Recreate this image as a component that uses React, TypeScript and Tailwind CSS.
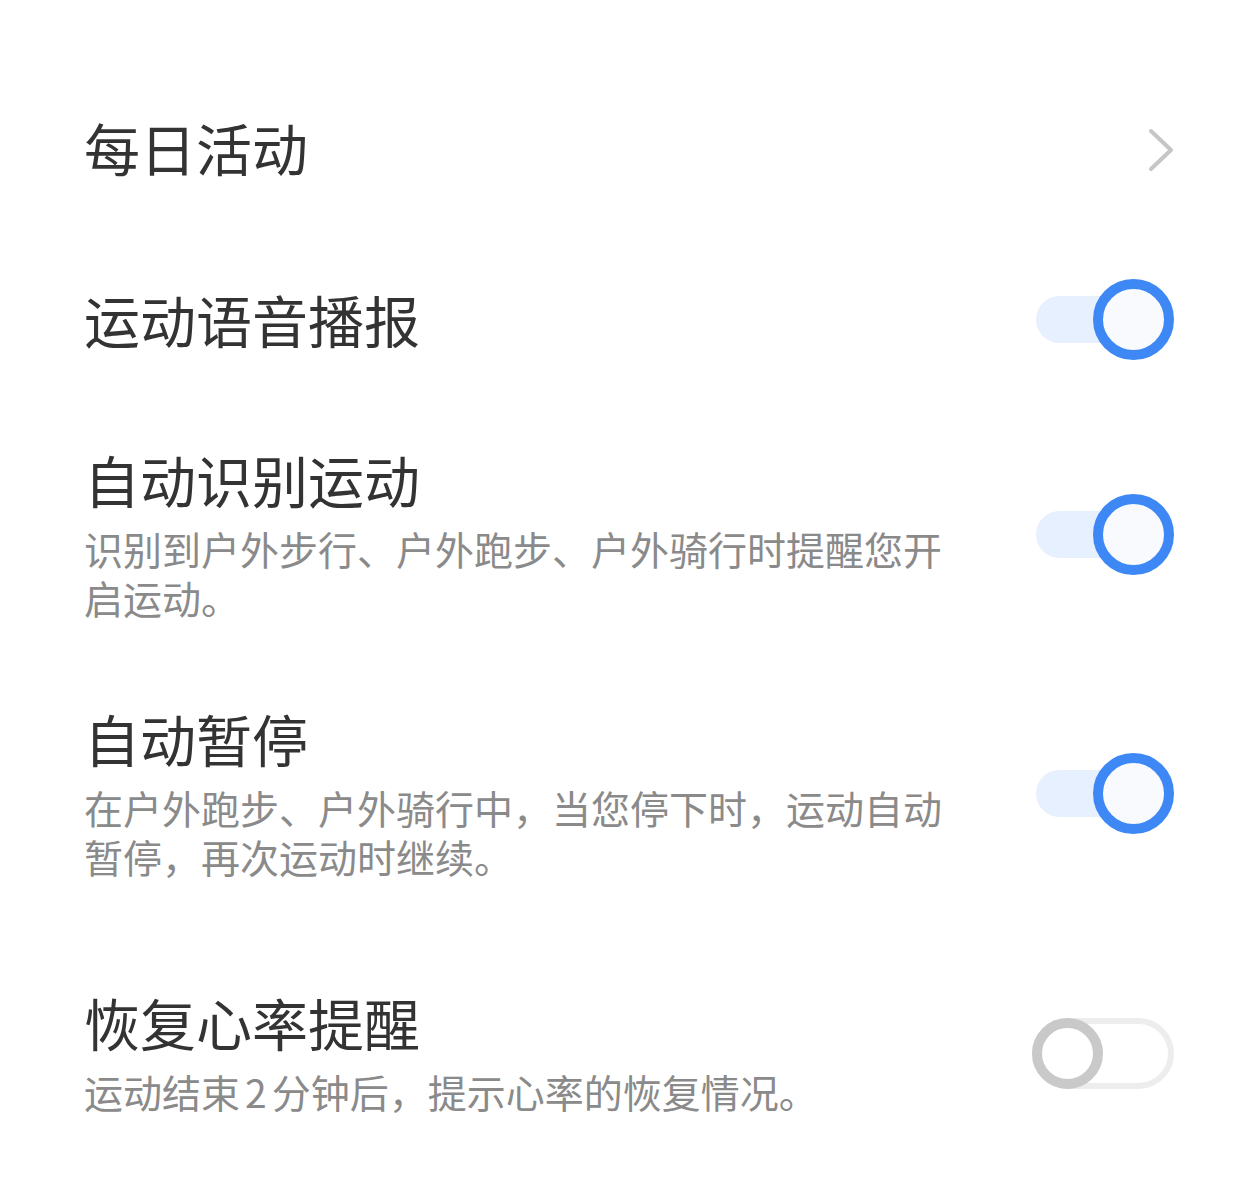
import React from 'react';

const font = { fontFamily: '"Noto Sans CJK SC", "Noto Sans", sans-serif' };

const ToggleOn = () => (
  <div className="relative w-[138px] h-[81px] shrink-0 mb-[4px]">
    <div className="absolute left-0 top-[17px] h-[47px] w-[110px] rounded-full bg-[#e6f0fe]" />
    <div className="absolute right-0 top-0 size-[81px] rounded-full border-[10px] border-[#3d88f5] bg-[#f8fafe]" />
  </div>
);

const ToggleOff = () => (
  <div className="relative w-[142px] h-[71px] shrink-0 mb-[4px] rounded-full border-[6px] border-[#ededed] bg-white">
    <div className="absolute left-[-6px] top-[-6px] size-[71px] rounded-full border-[10px] border-[#c9c9c9] bg-white" />
  </div>
);

const Chevron = () => (
  <svg width="28" height="46" viewBox="0 0 28 46" className="shrink-0 -mr-[1px]">
    <polyline
      points="4,4 24,23 4,42"
      fill="none"
      stroke="#c6c6c6"
      strokeWidth="4"
      strokeLinecap="round"
      strokeLinejoin="round"
    />
  </svg>
);

const Title: React.FC<{ children: React.ReactNode }> = ({ children }) => (
  <div className="text-[56px] leading-[66px] text-[#333333]">{children}</div>
);

const Desc: React.FC<{ children: React.ReactNode }> = ({ children }) => (
  <div className="mt-[12px] w-[870px] text-[39px] leading-[49px] text-[#8a8a8a]">{children}</div>
);

// text block sits a touch higher than the switch, like the device screen
const Text: React.FC<{ children: React.ReactNode }> = ({ children }) => (
  <div className="-ml-[2px] pb-[5px]">{children}</div>
);

export default function App() {
  return (
    <div className="w-[1260px] h-[1177px] bg-white px-[86px] pt-[114px] flex flex-col" style={font}>
      <div className="flex items-center justify-between">
        <Text>
          <Title>每日活动</Title>
        </Text>
        <Chevron />
      </div>

      <div className="mt-[94px] flex items-center justify-between">
        <Text>
          <Title>运动语音播报</Title>
        </Text>
        <ToggleOn />
      </div>

      <div className="mt-[82px] flex items-center justify-between">
        <Text>
          <Title>自动识别运动</Title>
          <Desc>识别到户外步行、户外跑步、户外骑行时提醒您开启运动。</Desc>
        </Text>
        <ToggleOn />
      </div>

      <div className="mt-[78px] flex items-center justify-between">
        <Text>
          <Title>自动暂停</Title>
          <Desc>在户外跑步、户外骑行中，当您停下时，运动自动暂停，再次运动时继续。</Desc>
        </Text>
        <ToggleOn />
      </div>

      <div className="mt-[103px] flex items-center justify-between">
        <Text>
          <Title>恢复心率提醒</Title>
          <Desc>
            运动结束<span className="mx-[5px]">2</span>分钟后，提示心率的恢复情况。
          </Desc>
        </Text>
        <ToggleOff />
      </div>
    </div>
  );
}
